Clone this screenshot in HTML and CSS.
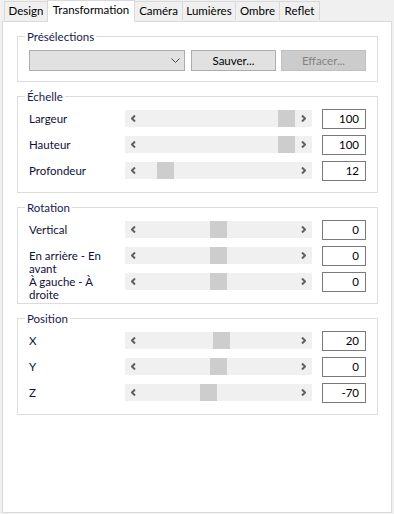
FILE: index.html
```html
<!DOCTYPE html>
<html lang="fr">
<head>
  <meta charset="UTF-8">
  <meta name="viewport" content="width=device-width, initial-scale=1.0">
  <title>Transformation</title>
  <link rel="stylesheet" href="styles.css">
</head>
<body>
  <div class="tabs">
    <div class="tab tab-design">Design</div>
    <div class="tab tab-transform active">Transformation</div>
    <div class="tab tab-camera after">Caméra</div>
    <div class="tab tab-lights after">Lumières</div>
    <div class="tab tab-shadow after">Ombre</div>
    <div class="tab tab-reflect after">Reflet</div>
  </div>

  <div class="panel">
    <!-- Presets -->
    <fieldset class="group presets">
      <legend>Présélections</legend>
      <div class="preset-row">
        <div class="combo">
          <svg class="combo-arrow" width="9" height="5" viewBox="0 0 9 5"><path d="M0.5 0.5 L4.5 4.5 L8.5 0.5" fill="none" stroke="#444" stroke-width="1"/></svg>
        </div>
        <button class="btn">Sauver...</button>
        <button class="btn disabled">Effacer...</button>
      </div>
    </fieldset>

    <!-- Scale -->
    <fieldset class="group">
      <legend>Échelle</legend>
      <div class="rows">
        <div class="row">
          <span class="label">Largeur</span>
          <div class="track">
            <span class="arrow"><svg width="5" height="7" viewBox="0 0 5 7"><path d="M4 0.5 L1 3.5 L4 6.5" fill="none" stroke="#606060" stroke-width="2"/></svg></span>
            <span class="thumb" style="left: 153px"></span>
            <span class="arrow right"><svg width="5" height="7" viewBox="0 0 5 7"><path d="M1 0.5 L4 3.5 L1 6.5" fill="none" stroke="#606060" stroke-width="2"/></svg></span>
          </div>
          <div class="field">100</div>
        </div>
        <div class="row">
          <span class="label">Hauteur</span>
          <div class="track">
            <span class="arrow"><svg width="5" height="7" viewBox="0 0 5 7"><path d="M4 0.5 L1 3.5 L4 6.5" fill="none" stroke="#606060" stroke-width="2"/></svg></span>
            <span class="thumb" style="left: 153px"></span>
            <span class="arrow right"><svg width="5" height="7" viewBox="0 0 5 7"><path d="M1 0.5 L4 3.5 L1 6.5" fill="none" stroke="#606060" stroke-width="2"/></svg></span>
          </div>
          <div class="field">100</div>
        </div>
        <div class="row">
          <span class="label">Profondeur</span>
          <div class="track">
            <span class="arrow"><svg width="5" height="7" viewBox="0 0 5 7"><path d="M4 0.5 L1 3.5 L4 6.5" fill="none" stroke="#606060" stroke-width="2"/></svg></span>
            <span class="thumb" style="left: 32px"></span>
            <span class="arrow right"><svg width="5" height="7" viewBox="0 0 5 7"><path d="M1 0.5 L4 3.5 L1 6.5" fill="none" stroke="#606060" stroke-width="2"/></svg></span>
          </div>
          <div class="field">12</div>
        </div>
      </div>
    </fieldset>

    <!-- Rotation -->
    <fieldset class="group">
      <legend>Rotation</legend>
      <div class="rows">
        <div class="row">
          <span class="label">Vertical</span>
          <div class="track">
            <span class="arrow"><svg width="5" height="7" viewBox="0 0 5 7"><path d="M4 0.5 L1 3.5 L4 6.5" fill="none" stroke="#606060" stroke-width="2"/></svg></span>
            <span class="thumb" style="left: 85px"></span>
            <span class="arrow right"><svg width="5" height="7" viewBox="0 0 5 7"><path d="M1 0.5 L4 3.5 L1 6.5" fill="none" stroke="#606060" stroke-width="2"/></svg></span>
          </div>
          <div class="field">0</div>
        </div>
        <div class="row">
          <span class="label">En arrière - En avant</span>
          <div class="track">
            <span class="arrow"><svg width="5" height="7" viewBox="0 0 5 7"><path d="M4 0.5 L1 3.5 L4 6.5" fill="none" stroke="#606060" stroke-width="2"/></svg></span>
            <span class="thumb" style="left: 85px"></span>
            <span class="arrow right"><svg width="5" height="7" viewBox="0 0 5 7"><path d="M1 0.5 L4 3.5 L1 6.5" fill="none" stroke="#606060" stroke-width="2"/></svg></span>
          </div>
          <div class="field">0</div>
        </div>
        <div class="row">
          <span class="label">À gauche - À droite</span>
          <div class="track">
            <span class="arrow"><svg width="5" height="7" viewBox="0 0 5 7"><path d="M4 0.5 L1 3.5 L4 6.5" fill="none" stroke="#606060" stroke-width="2"/></svg></span>
            <span class="thumb" style="left: 85px"></span>
            <span class="arrow right"><svg width="5" height="7" viewBox="0 0 5 7"><path d="M1 0.5 L4 3.5 L1 6.5" fill="none" stroke="#606060" stroke-width="2"/></svg></span>
          </div>
          <div class="field">0</div>
        </div>
      </div>
    </fieldset>

    <!-- Position -->
    <fieldset class="group">
      <legend>Position</legend>
      <div class="rows">
        <div class="row">
          <span class="label">X</span>
          <div class="track">
            <span class="arrow"><svg width="5" height="7" viewBox="0 0 5 7"><path d="M4 0.5 L1 3.5 L4 6.5" fill="none" stroke="#606060" stroke-width="2"/></svg></span>
            <span class="thumb" style="left: 88px"></span>
            <span class="arrow right"><svg width="5" height="7" viewBox="0 0 5 7"><path d="M1 0.5 L4 3.5 L1 6.5" fill="none" stroke="#606060" stroke-width="2"/></svg></span>
          </div>
          <div class="field">20</div>
        </div>
        <div class="row">
          <span class="label">Y</span>
          <div class="track">
            <span class="arrow"><svg width="5" height="7" viewBox="0 0 5 7"><path d="M4 0.5 L1 3.5 L4 6.5" fill="none" stroke="#606060" stroke-width="2"/></svg></span>
            <span class="thumb" style="left: 85px"></span>
            <span class="arrow right"><svg width="5" height="7" viewBox="0 0 5 7"><path d="M1 0.5 L4 3.5 L1 6.5" fill="none" stroke="#606060" stroke-width="2"/></svg></span>
          </div>
          <div class="field">0</div>
        </div>
        <div class="row">
          <span class="label">Z</span>
          <div class="track">
            <span class="arrow"><svg width="5" height="7" viewBox="0 0 5 7"><path d="M4 0.5 L1 3.5 L4 6.5" fill="none" stroke="#606060" stroke-width="2"/></svg></span>
            <span class="thumb" style="left: 75px"></span>
            <span class="arrow right"><svg width="5" height="7" viewBox="0 0 5 7"><path d="M1 0.5 L4 3.5 L1 6.5" fill="none" stroke="#606060" stroke-width="2"/></svg></span>
          </div>
          <div class="field">-70</div>
        </div>
      </div>
    </fieldset>
  </div>
</body>
</html>
```

FILE: styles.css
```css
/* Window background */
body {
  margin: 0;
  background: #f0f0f0;
  font-family: 'Lato', 'Liberation Sans', sans-serif;
  font-size: 11.5px;
  color: #000;
}

/* Tab strip */
.tabs {
  display: flex;
  height: 21px;
  padding-left: 4px;
  align-items: flex-end;
  position: relative;
  z-index: 1;
}

.tab {
  box-sizing: border-box;
  height: 19px;
  margin-bottom: 1px;
  line-height: 17px;
  text-align: center;
  white-space: nowrap;
  border-top: 1px solid #d9d9d9;
  border-left: 1px solid #d9d9d9;
  background: #f0f0f0;
}

.tab.after {
  border-left: none;
  border-right: 1px solid #d9d9d9;
}

.tab.active {
  height: 22px;
  margin-bottom: -1px;
  line-height: 18px;
  border-right: 1px solid #d9d9d9;
  background: #fff;
  position: relative;
  z-index: 2;
}

.tab-design { width: 43px; }
.tab-transform { width: 88px; }
.tab-camera { width: 48px; }
.tab-lights { width: 53px; }
.tab-shadow { width: 44px; }
.tab-reflect { width: 40px; }

/* Main panel */
.panel {
  box-sizing: border-box;
  margin: 0 2px;
  height: 492px;
  background: #fff;
  border: 1px solid #d9d9d9;
  padding: 7px 0 0 14px;
}

/* Group boxes */
.group {
  box-sizing: border-box;
  width: 361px;
  margin: 0 0 7px 0;
  padding: 5px 11px 11px 11px;
  border: 1px solid #dcdcdc;
  min-width: 0;
}

.group legend {
  padding: 0 2px;
  margin-left: -4px;
  line-height: 15px;
  color: #1a1a50;
}

.presets {
  padding-top: 6px;
  padding-bottom: 10px;
}

.preset-row {
  display: flex;
  height: 21px;
}

.combo {
  box-sizing: border-box;
  width: 156px;
  height: 21px;
  background: #e1e1e1;
  border: 1px solid #adadad;
  display: flex;
  align-items: center;
  justify-content: flex-end;
  padding-right: 4px;
}

.btn {
  box-sizing: border-box;
  width: 85px;
  height: 21px;
  margin-left: 6px;
  padding: 0;
  background: #e1e1e1;
  border: 1px solid #adadad;
  font-family: inherit;
  font-size: 11.5px;
  color: #000;
}

.btn.disabled {
  margin-left: 5px;
  background: #cccccc;
  border-color: #bfbfbf;
  color: #838383;
}

/* Slider rows */
.rows {
  display: flex;
  flex-direction: column;
  gap: 6px;
}

.row {
  display: grid;
  grid-template-columns: 96px 187px 44px;
  height: 20px;
}

.label {
  height: 20px;
  width: 86px;
  padding-top: 3px;
  box-sizing: border-box;
  line-height: 13px;
  color: #10103a;
}

.track {
  position: relative;
  height: 17px;
  margin-top: 1px;
  background: #f0f0f0;
  display: flex;
  justify-content: space-between;
}

.arrow {
  width: 17px;
  height: 17px;
  display: flex;
  align-items: center;
  justify-content: center;
}

.arrow svg {
  display: block;
}

.thumb {
  position: absolute;
  top: 0;
  width: 17px;
  height: 17px;
  background: #cdcdcd;
}

.field {
  box-sizing: border-box;
  margin-left: 10px;
  width: 44px;
  height: 20px;
  border: 1px solid #7a7a7a;
  text-align: right;
  padding-right: 6px;
  line-height: 18px;
}
```
